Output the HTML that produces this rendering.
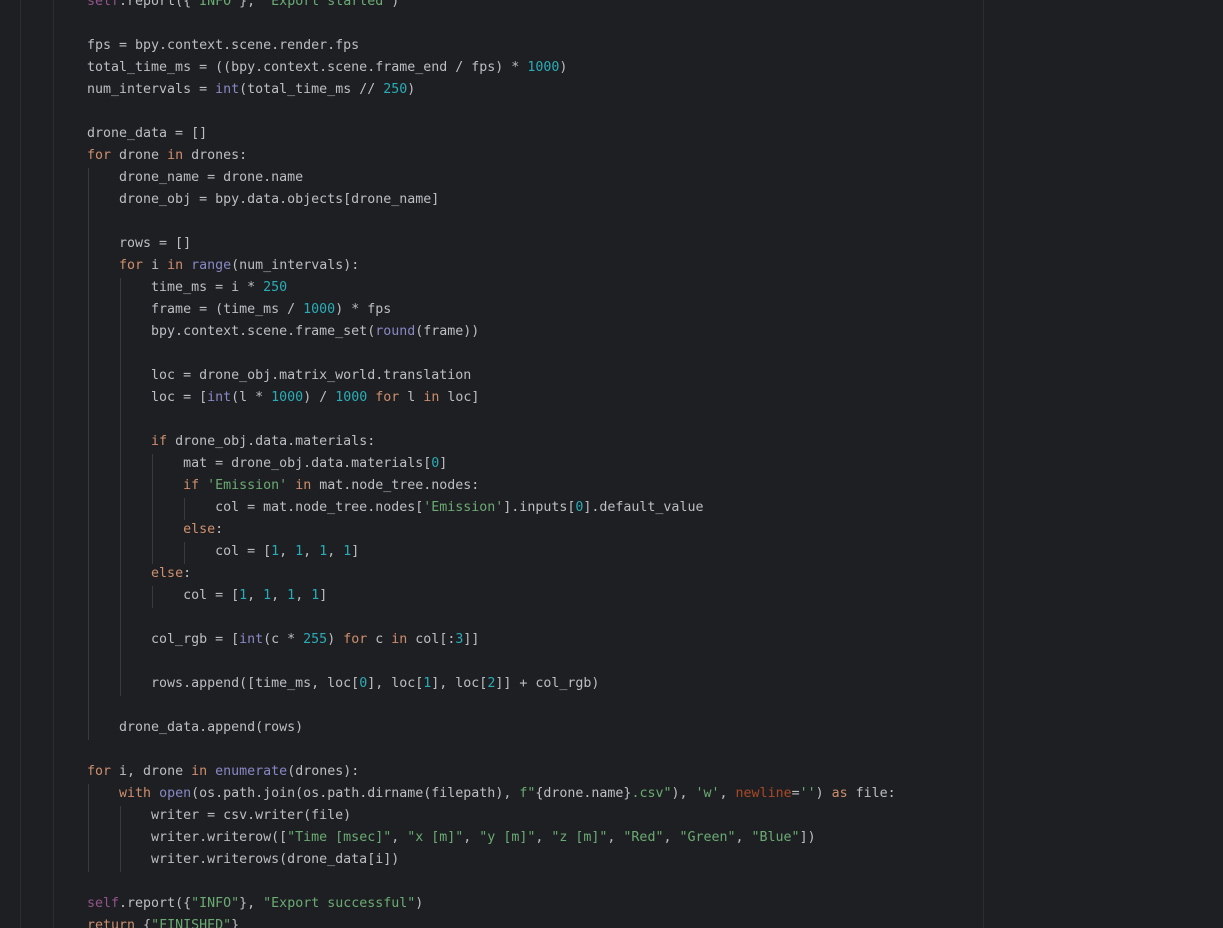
<!DOCTYPE html>
<html><head><meta charset="utf-8"><style>
html,body{margin:0;padding:0;background:#1e1f22;width:1223px;height:928px;overflow:hidden;position:relative}
.v{position:absolute;width:1px;background:#2b2d30}
.g{position:absolute;width:1px;background:#393b40}
pre{position:absolute;left:87px;top:-9px;margin:0;font-family:"DejaVu Sans Mono","Liberation Mono",monospace;font-size:13.3px;line-height:22px;color:#bcbec4;letter-spacing:0}
.k{color:#cf8e6d}.n{color:#2aacb8}.b{color:#8888c6}.s{color:#6aab73}.f{color:#94558d}.p{color:#aa4926}
</style></head><body>
<div class="v" style="left:20px;top:0;height:928px"></div>
<div class="v" style="left:53px;top:0;height:928px"></div>
<div class="v" style="left:983px;top:0;height:928px"></div>
<div class="g" style="left:88px;top:168px;height:572px"></div>
<div class="g" style="left:120px;top:278px;height:418px"></div>
<div class="g" style="left:152px;top:454px;height:110px"></div>
<div class="g" style="left:152px;top:586px;height:22px"></div>
<div class="g" style="left:184px;top:498px;height:22px"></div>
<div class="g" style="left:184px;top:542px;height:22px"></div>
<div class="g" style="left:88px;top:784px;height:88px"></div>
<div class="g" style="left:120px;top:806px;height:66px"></div>
<pre><span class="f">self</span>.report({<span class="s">"INFO"</span>}, <span class="s">"Export started"</span>)

fps = bpy.context.scene.render.fps
total_time_ms = ((bpy.context.scene.frame_end / fps) * <span class="n">1000</span>)
num_intervals = <span class="b">int</span>(total_time_ms // <span class="n">250</span>)

drone_data = []
<span class="k">for</span> drone <span class="k">in</span> drones:
    drone_name = drone.name
    drone_obj = bpy.data.objects[drone_name]

    rows = []
    <span class="k">for</span> i <span class="k">in</span> <span class="b">range</span>(num_intervals):
        time_ms = i * <span class="n">250</span>
        frame = (time_ms / <span class="n">1000</span>) * fps
        bpy.context.scene.frame_set(<span class="b">round</span>(frame))

        loc = drone_obj.matrix_world.translation
        loc = [<span class="b">int</span>(l * <span class="n">1000</span>) / <span class="n">1000</span> <span class="k">for</span> l <span class="k">in</span> loc]

        <span class="k">if</span> drone_obj.data.materials:
            mat = drone_obj.data.materials[<span class="n">0</span>]
            <span class="k">if</span> <span class="s">'Emission'</span> <span class="k">in</span> mat.node_tree.nodes:
                col = mat.node_tree.nodes[<span class="s">'Emission'</span>].inputs[<span class="n">0</span>].default_value
            <span class="k">else</span>:
                col = [<span class="n">1</span>, <span class="n">1</span>, <span class="n">1</span>, <span class="n">1</span>]
        <span class="k">else</span>:
            col = [<span class="n">1</span>, <span class="n">1</span>, <span class="n">1</span>, <span class="n">1</span>]

        col_rgb = [<span class="b">int</span>(c * <span class="n">255</span>) <span class="k">for</span> c <span class="k">in</span> col[:<span class="n">3</span>]]

        rows.append([time_ms, loc[<span class="n">0</span>], loc[<span class="n">1</span>], loc[<span class="n">2</span>]] + col_rgb)

    drone_data.append(rows)

<span class="k">for</span> i, drone <span class="k">in</span> <span class="b">enumerate</span>(drones):
    <span class="k">with</span> <span class="b">open</span>(os.path.join(os.path.dirname(filepath), <span class="s">f"</span>{drone.name}<span class="s">.csv"</span>), <span class="s">'w'</span>, <span class="p">newline</span>=<span class="s">''</span>) <span class="k">as</span> file:
        writer = csv.writer(file)
        writer.writerow([<span class="s">"Time [msec]"</span>, <span class="s">"x [m]"</span>, <span class="s">"y [m]"</span>, <span class="s">"z [m]"</span>, <span class="s">"Red"</span>, <span class="s">"Green"</span>, <span class="s">"Blue"</span>])
        writer.writerows(drone_data[i])

<span class="f">self</span>.report({<span class="s">"INFO"</span>}, <span class="s">"Export successful"</span>)
<span class="k">return</span> {<span class="s">"FINISHED"</span>}
</pre>
</body></html>
